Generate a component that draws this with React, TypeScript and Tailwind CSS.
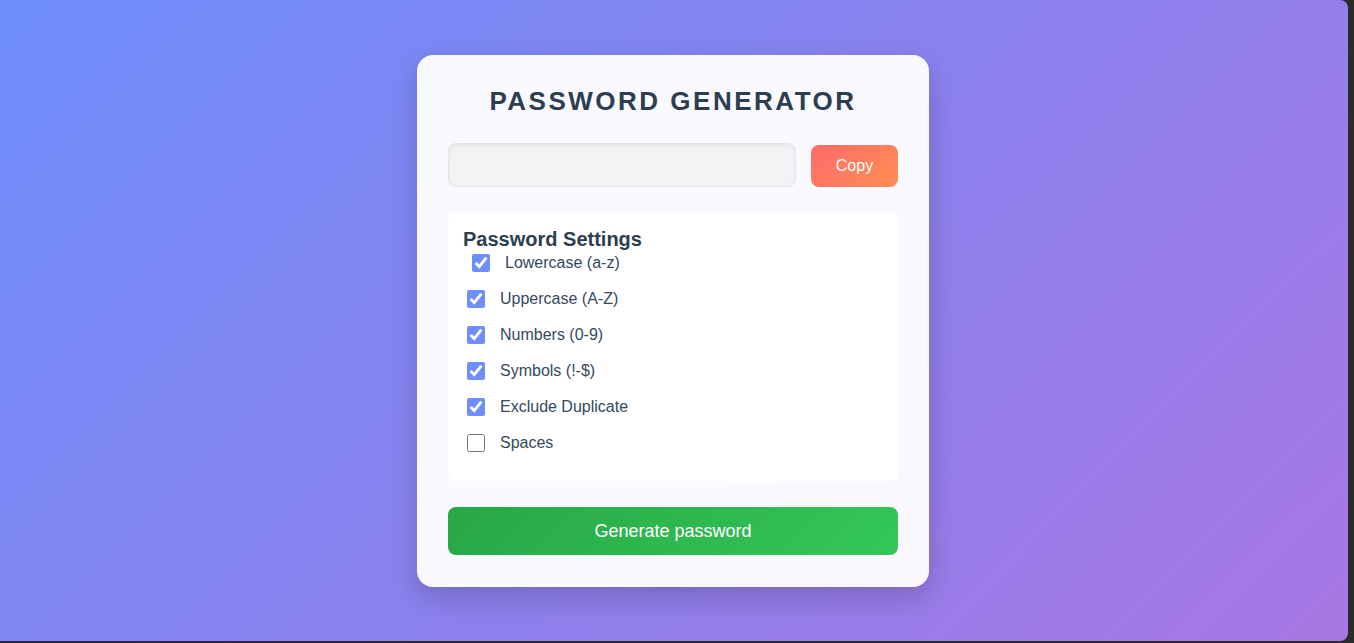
import { useState } from "react";

const options = [
  { key: "lower", label: "Lowercase (a-z)", checked: true },
  { key: "upper", label: "Uppercase (A-Z)", checked: true },
  { key: "numbers", label: "Numbers (0-9)", checked: true },
  { key: "symbols", label: "Symbols (!-$)", checked: true },
  { key: "dupes", label: "Exclude Duplicate", checked: true },
  { key: "spaces", label: "Spaces", checked: false },
];

export default function App() {
  const [state, setState] = useState<Record<string, boolean>>(
    Object.fromEntries(options.map((o) => [o.key, o.checked]))
  );
  const [password] = useState("");

  return (
    <div className="h-[643px] w-[1354px] bg-[#2b2b2b] pr-[6px] pb-[2px] font-['Liberation_Sans',Arial,sans-serif]">
      <div className="flex h-full w-full items-start justify-center rounded-r-lg bg-[linear-gradient(135deg,#6e8efb,#a777e3)] pt-[55px] pr-[2px]">
        <div className="w-[512px] rounded-2xl bg-white/95 px-[31px] pt-[30px] pb-[32px] shadow-[0_10px_30px_rgba(0,0,0,0.2)]">
          <h1 className="text-center text-[26px] font-bold leading-8 tracking-[2.5px] text-[#2c3e50]">
            PASSWORD GENERATOR
          </h1>

          <div className="mt-[26px] flex items-end gap-[15px]">
            <input
              readOnly
              value={password}
              className="h-[44px] flex-1 rounded-lg border border-[#e3e5e8] bg-[#f2f3f5] px-3 text-base text-[#2c3e50] shadow-[inset_0_2px_4px_rgba(0,0,0,0.06)] outline-none"
            />
            <button className="h-[42px] w-[87px] rounded-lg bg-[linear-gradient(135deg,#ff6b6b,#ff8e53)] text-base text-white">
              Copy
            </button>
          </div>

          <div className="mt-[26px] rounded-lg bg-white px-[15px] pt-[15px] pb-[28px]">
            <h2 className="text-[20px] font-bold leading-[22px] text-[#2c3e50]">Password Settings</h2>
            {options.map((o, i) => (
              <label
                key={o.key}
                className={`flex h-5 cursor-pointer items-center gap-[15px] text-base text-[#34495e] ${
                  i === 0 ? "ml-[9px] mt-[3px]" : "ml-[4px] mt-4"
                }`}
              >
                <input
                  type="checkbox"
                  checked={state[o.key]}
                  onChange={() => setState((s) => ({ ...s, [o.key]: !s[o.key] }))}
                  className="m-0 h-[18px] w-[18px] accent-[#6e8efb]"
                />
                <span>{o.label}</span>
              </label>
            ))}
          </div>

          <button className="mt-[26px] h-[48px] w-full rounded-lg bg-[linear-gradient(135deg,#28a745,#34c759)] text-[18px] text-white">
            Generate password
          </button>
        </div>
      </div>
    </div>
  );
}
